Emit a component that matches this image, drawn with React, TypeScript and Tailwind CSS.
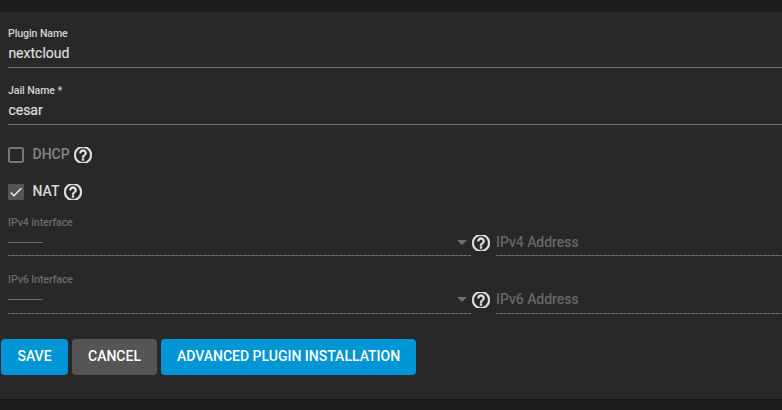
import React from "react";

function HelpIcon() {
  return (
    <span className="flex h-4 w-[18px] shrink-0 items-center justify-center overflow-hidden text-[#e6e6e6]">
      <svg viewBox="2 2 20 20" className="h-[18px] w-[18px] shrink-0" fill="currentColor" stroke="currentColor" strokeWidth="0.5">
        <path d="M11 18h2v-2h-2v2zm1-16C6.48 2 2 6.48 2 12s4.480 10 10 10 10-4.480 10-10S17.520 2 12 2zm0 18c-4.410 0-8-3.590-8-8s3.590-8 8-8 8 3.590 8 8-3.590 8-8 8zm0-14c-2.210 0-4 1.790-4 4h2c0-1.100.9-2 2-2s2 .9 2 2c0 2-3 1.750-3 5h2c0-2.250 3-2.500 3-5 0-2.210-1.790-4-4-4z" />
      </svg>
    </span>
  );
}

function TextField({ label, value }: { label: string; value: string }) {
  return (
    <label className="block h-[57px]">
      <span className="block h-4 text-[10.6px] leading-4 font-medium tracking-[-0.1px] text-[#d2d2d2]">{label}</span>
      <span className="block h-[26px] border-b border-[#6b6b6b] pt-[3px] pl-[0.4px] text-[14px] leading-4 text-[#dedede] [-webkit-text-stroke:0.2px_#dedede]">{value}</span>
    </label>
  );
}

const dashes =
  "h-px bg-[repeating-linear-gradient(to_right,#6e6e6e_0px,#6e6e6e_3px,#484848_3px,#484848_4px)]";

function InterfaceRow({ label, address, tall }: { label: string; address: string; tall?: boolean }) {
  const gap = tall ? "h-[25px]" : "h-6";
  return (
    <div className="flex h-[57px]">
      <div className="w-[463px] shrink-0">
        <div className="h-[17px] pt-px text-[10.6px] leading-4 font-medium tracking-[-0.1px] text-[#6a6a6a]">{label}</div>
        <div className={`flex items-start justify-between pt-[9px] ${gap}`}>
          <span className="mt-[2px] h-px w-[35px] bg-[#6e6e6e]" />
          <span className="mr-1 border-x-[5px] border-t-[5px] border-x-transparent border-t-[#6e6e6e]" />
        </div>
        <div className={dashes} />
      </div>
      <div className="mt-[21px] ml-px">
        <HelpIcon />
      </div>
      <div className="ml-[6px] flex-1 pt-[17px]">
        <div className={`pt-[3px] text-[14px] leading-4 font-medium tracking-[-0.05px] text-[#666] ${gap}`}>{address}</div>
        <div className={dashes} />
      </div>
    </div>
  );
}

function CheckRow({ label, checked }: { label: string; checked?: boolean }) {
  return (
    <div className="flex h-4 items-center">
      {checked ? (
        <span className="flex h-4 w-4 items-center justify-center rounded-[1px] bg-[#555]">
          <svg viewBox="0 0 16 16" className="h-4 w-4" fill="none" stroke="#eee" strokeWidth="1.5">
            <path d="M2.800 8.400 6 11.700 13.400 4.300" />
          </svg>
        </span>
      ) : (
        <span className="h-4 w-4 rounded-[2px] border-2 border-[#777]" />
      )}
      <span className={`ml-[8.500px] h-[18px] text-[14px] leading-4 font-medium ${checked ? "text-[#d8d8d8]" : "text-[#858585]"}`}>{label}</span>
      <span className="ml-[4.500px]">
        <HelpIcon />
      </span>
    </div>
  );
}

function Button({ children, className }: { children: React.ReactNode; className: string }) {
  return (
    <button className={`h-9 rounded-[4px] pb-[2px] text-[14px] leading-[34px] font-medium whitespace-nowrap text-white ${className}`}>
      {children}
    </button>
  );
}

export default function App() {
  return (
    <div className="h-[410px] w-[782px] overflow-hidden bg-[#1e1e1e] pt-3 font-['Roboto',sans-serif]">
      <main className="h-[388px] border-b border-[#151515] bg-[#282828] pt-[14px]">
        <form className="pl-2">
          <TextField label="Plugin Name" value="nextcloud" />
          <TextField label="Jail Name *" value="cesar" />
          <div className="flex h-[74px] flex-col gap-[21px] pt-[7px]">
            <CheckRow label="DHCP" />
            <CheckRow label="NAT" checked />
          </div>
          <InterfaceRow label="IPv4 interface" address="IPv4 Address" />
          <InterfaceRow label="IPv6 Interface" address="IPv6 Address" tall />
        </form>
        <div className="mt-[11px] flex gap-1 pl-px">
          <Button className="w-[67px] bg-[#0095d5]">SAVE</Button>
          <Button className="w-[85px] bg-[#555]">CANCEL</Button>
          <Button className="w-[255px] bg-[#0095d5]">ADVANCED PLUGIN INSTALLATION</Button>
        </div>
      </main>
    </div>
  );
}
